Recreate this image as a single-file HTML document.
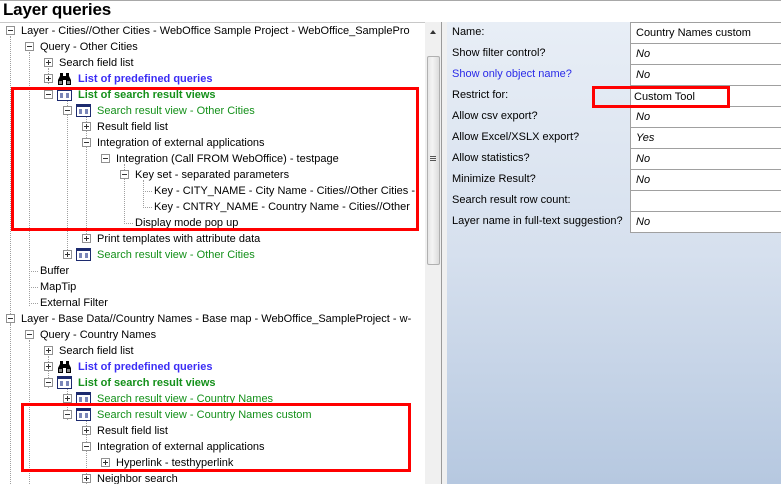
<!DOCTYPE html>
<html><head><style>
*,*::before,*::after{margin:0;padding:0;box-sizing:border-box}
body{width:781px;height:484px;overflow:hidden;background:#fff;font-family:"Liberation Sans",Arial,sans-serif;font-size:11px;color:#000;position:relative}
.t{position:absolute;left:3px;top:0;font-size:17px;font-weight:bold;letter-spacing:-0.2px}
.tree{position:absolute;left:0;top:23px;width:425px;height:461px;overflow:hidden}
.tree>div{position:absolute;left:0;top:-23px;width:425px;height:484px}
.r{position:absolute;height:16px;line-height:16px;white-space:nowrap}
.b{position:absolute;width:9px;height:9px;border:1px solid #919191;background:#fff;top:3px}
.b::before{content:"";position:absolute;left:1px;top:3px;width:5px;height:1px;background:#333}
.b.p::after{content:"";position:absolute;left:3px;top:1px;width:1px;height:5px;background:#333}
.i{position:absolute;top:1px;width:15px;height:13px;border:1px solid #1c2a6e;border-top:3px solid #1c2a6e;background:#fff}
.i::before{content:"";position:absolute;left:2px;top:2px;width:9px;height:5px;border-left:3px solid #7a86b8;border-right:3px solid #7a86b8;background:#fff}
.bn{position:absolute;top:2px;width:15px;height:12px}
.g{color:#14901a}
.gb{color:#14901a;font-weight:bold}
.bb{color:#3b2df5;font-weight:bold}
.red{position:absolute;border:3px solid #ff0000}
.vl{position:absolute;border-left:1px dotted #a0a0a0;width:0}
.hl{position:absolute;border-top:1px dotted #a0a0a0;height:0}
.sb{position:absolute;left:425px;top:22px;width:17px;height:462px;background:#f0f0f0;border-right:1px solid #9a9a9a}
.th{position:absolute;left:2px;top:34px;width:13px;height:209px;background:linear-gradient(90deg,#e6e6e6,#f4f4f4 40%,#dcdcdc);border:1px solid #b0b0b0;border-radius:2px}
.rp{position:absolute;left:447px;top:22px;width:334px;height:462px;background:linear-gradient(#e8eef6,#d6e0ee 50%,#b6c8e0)}
.lb{position:absolute;left:5px;height:21px;line-height:21px;white-space:nowrap}
.v{position:absolute;left:183px;width:160px;height:22px;line-height:20px;background:#fff;border:1px solid #a0a0a0;padding-left:5px;font-style:italic;white-space:nowrap}
</style></head><body>
<div style="position:absolute;left:0;top:0;width:781px;height:1px;background:#a8a8a8"></div>
<div class="t">Layer queries</div>
<div style="position:absolute;left:0;top:22px;width:442px;height:1px;background:#c8c8c8"></div>

<svg width="0" height="0" style="position:absolute"><defs><symbol id="bin" viewBox="0 0 15 12"><path d="M3 0h3v3h3V0h3v3l2 4v5H9V7H6v5H1V7l2-4z" fill="#000"/><rect x="2" y="8" width="3" height="3" fill="#888"/><rect x="10" y="8" width="3" height="3" fill="#888"/></symbol></defs></svg>

<div class="tree"><div>
<div class="vl" style="left:10px;top:36px;height:292px"></div>
<div class="vl" style="left:10px;top:324px;height:160px"></div>
<div class="vl" style="left:29px;top:52px;height:254px"></div>
<div class="vl" style="left:29px;top:340px;height:144px"></div>
<div class="vl" style="left:48px;top:68px;height:16px"></div>
<div class="vl" style="left:67px;top:100px;height:156px"></div>
<div class="vl" style="left:86px;top:116px;height:124px"></div>
<div class="vl" style="left:48px;top:356px;height:32px"></div>
<div class="vl" style="left:67px;top:388px;height:32px"></div>
<div class="vl" style="left:86px;top:420px;height:64px"></div>
<div class="vl" style="left:124px;top:164px;height:60px"></div>
<div class="vl" style="left:143px;top:180px;height:28px"></div>
<div class="hl" style="left:143px;top:191px;width:9px"></div>
<div class="hl" style="left:143px;top:207px;width:9px"></div>
<div class="hl" style="left:124px;top:223px;width:9px"></div>
<div class="hl" style="left:29px;top:271px;width:9px"></div>
<div class="hl" style="left:29px;top:287px;width:9px"></div>
<div class="hl" style="left:29px;top:303px;width:9px"></div>

<div class="r" style="top:23px;left:6px"><span class="b" style="left:0"></span><span style="position:absolute;left:15px">Layer - Cities//Other Cities - WebOffice Sample Project - WebOffice_SamplePro</span></div>
<div class="r" style="top:39px;left:25px"><span class="b" style="left:0"></span><span style="position:absolute;left:15px">Query - Other Cities</span></div>
<div class="r" style="top:55px;left:44px"><span class="b p" style="left:0"></span><span style="position:absolute;left:15px">Search field list</span></div>
<div class="r" style="top:71px;left:44px"><span class="b p" style="left:0"></span><svg class="bn" style="left:13px"><use href="#bin"/></svg><span class="bb" style="position:absolute;left:34px">List of predefined queries</span></div>
<div class="r" style="top:87px;left:44px"><span class="b" style="left:0"></span><span class="i" style="left:13px"></span><span class="gb" style="position:absolute;left:34px">List of search result views</span></div>
<div class="r" style="top:103px;left:63px"><span class="b" style="left:0"></span><span class="i" style="left:13px"></span><span class="g" style="position:absolute;left:34px">Search result view - Other Cities</span></div>
<div class="r" style="top:119px;left:82px"><span class="b p" style="left:0"></span><span style="position:absolute;left:15px">Result field list</span></div>
<div class="r" style="top:135px;left:82px"><span class="b" style="left:0"></span><span style="position:absolute;left:15px">Integration of external applications</span></div>
<div class="r" style="top:151px;left:101px"><span class="b" style="left:0"></span><span style="position:absolute;left:15px">Integration (Call FROM WebOffice) - testpage</span></div>
<div class="r" style="top:167px;left:120px"><span class="b" style="left:0"></span><span style="position:absolute;left:15px">Key set - separated parameters</span></div>
<div class="r" style="top:183px;left:154px">Key - CITY_NAME - City Name - Cities//Other Cities -</div>
<div class="r" style="top:199px;left:154px">Key - CNTRY_NAME - Country Name - Cities//Other</div>
<div class="r" style="top:215px;left:135px">Display mode pop up</div>
<div class="r" style="top:231px;left:82px"><span class="b p" style="left:0"></span><span style="position:absolute;left:15px">Print templates with attribute data</span></div>
<div class="r" style="top:247px;left:63px"><span class="b p" style="left:0"></span><span class="i" style="left:13px"></span><span class="g" style="position:absolute;left:34px">Search result view - Other Cities</span></div>
<div class="r" style="top:263px;left:40px">Buffer</div>
<div class="r" style="top:279px;left:40px">MapTip</div>
<div class="r" style="top:295px;left:40px">External Filter</div>
<div class="r" style="top:311px;left:6px"><span class="b" style="left:0"></span><span style="position:absolute;left:15px">Layer - Base Data//Country Names - Base map - WebOffice_SampleProject - w-</span></div>
<div class="r" style="top:327px;left:25px"><span class="b" style="left:0"></span><span style="position:absolute;left:15px">Query - Country Names</span></div>
<div class="r" style="top:343px;left:44px"><span class="b p" style="left:0"></span><span style="position:absolute;left:15px">Search field list</span></div>
<div class="r" style="top:359px;left:44px"><span class="b p" style="left:0"></span><svg class="bn" style="left:13px"><use href="#bin"/></svg><span class="bb" style="position:absolute;left:34px">List of predefined queries</span></div>
<div class="r" style="top:375px;left:44px"><span class="b" style="left:0"></span><span class="i" style="left:13px"></span><span class="gb" style="position:absolute;left:34px">List of search result views</span></div>
<div class="r" style="top:391px;left:63px"><span class="b p" style="left:0"></span><span class="i" style="left:13px"></span><span class="g" style="position:absolute;left:34px">Search result view - Country Names</span></div>
<div class="r" style="top:407px;left:63px"><span class="b" style="left:0"></span><span class="i" style="left:13px"></span><span class="g" style="position:absolute;left:34px">Search result view - Country Names custom</span></div>
<div class="r" style="top:423px;left:82px"><span class="b p" style="left:0"></span><span style="position:absolute;left:15px">Result field list</span></div>
<div class="r" style="top:439px;left:82px"><span class="b" style="left:0"></span><span style="position:absolute;left:15px">Integration of external applications</span></div>
<div class="r" style="top:455px;left:101px"><span class="b p" style="left:0"></span><span style="position:absolute;left:15px">Hyperlink - testhyperlink</span></div>
<div class="r" style="top:471px;left:82px"><span class="b p" style="left:0"></span><span style="position:absolute;left:15px">Neighbor search</span></div>

<div class="red" style="left:11px;top:87px;width:408px;height:144px"></div>
<div class="red" style="left:21px;top:403px;width:390px;height:69px"></div>
</div></div>

<div class="sb">
<div style="position:absolute;left:5px;top:8px;width:0;height:0;border-left:3px solid transparent;border-right:3px solid transparent;border-bottom:4px solid #333"></div>
<div class="th"></div>
<div style="position:absolute;left:5px;top:134px;width:6px;height:5px;border-top:1px solid #555;border-bottom:1px solid #555"><div style="margin-top:1px;height:1px;background:#555"></div></div>
</div>
<div style="position:absolute;left:442px;top:22px;width:5px;height:462px;background:#f0f0f0"></div>

<div class="rp">
<div class="lb" style="top:0">Name:</div><div class="v" style="top:0;font-style:normal">Country Names custom</div>
<div class="lb" style="top:21px">Show filter control?</div><div class="v" style="top:21px">No</div>
<div class="lb" style="top:42px;color:#2a2ae8">Show only object name?</div><div class="v" style="top:42px">No</div>
<div class="lb" style="top:63px">Restrict for:</div><div class="v" style="top:63px;font-style:normal"></div>
<div class="lb" style="top:84px">Allow csv export?</div><div class="v" style="top:84px">No</div>
<div class="lb" style="top:105px">Allow Excel/XSLX export?</div><div class="v" style="top:105px">Yes</div>
<div class="lb" style="top:126px">Allow statistics?</div><div class="v" style="top:126px">No</div>
<div class="lb" style="top:147px">Minimize Result?</div><div class="v" style="top:147px">No</div>
<div class="lb" style="top:168px">Search result row count:</div><div class="v" style="top:168px"></div>
<div class="lb" style="top:189px">Layer name in full-text suggestion?</div><div class="v" style="top:189px">No</div>
<div style="position:absolute;left:145px;top:64px;width:138px;height:22px;border:3px solid #ff0000;line-height:16px;padding-left:39px;white-space:nowrap">Custom Tool</div>
</div>
</body></html>
